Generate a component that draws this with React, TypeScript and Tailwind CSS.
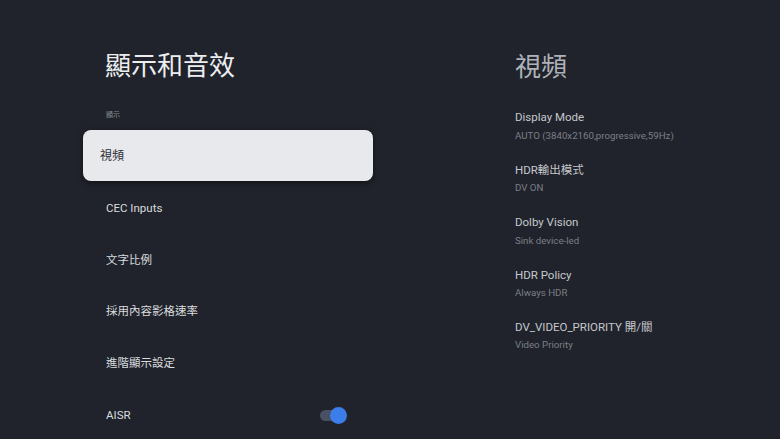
import React from "react";

const FONT = { fontFamily: 'Roboto, "Noto Sans CJK TC", "Noto Sans", sans-serif' };

const leftItems = ["CEC Inputs", "文字比例", "採用內容影格速率", "進階顯示設定"];

const rightItems = [
  ["Display Mode", "AUTO (3840x2160,progressive,59Hz)"],
  ["HDR輸出模式", "DV ON"],
  ["Dolby Vision", "Sink device-led"],
  ["HDR Policy", "Always HDR"],
  ["DV_VIDEO_PRIORITY 開/關", "Video Priority"],
];

export default function App() {
  return (
    <div className="w-[780px] h-[439px] overflow-hidden bg-[#20232b] flex" style={FONT}>
      <div className="ml-[83px] w-[290px] flex flex-col">
        <div className="shrink-0 h-[52px] mt-[40px] flex items-center pl-[22px] text-[26px] text-[#eceef0] leading-none">
          顯示和音效
        </div>
        <div className="shrink-0 mt-[16px] h-[14px] flex items-center pl-[23px] text-[7px] text-[#8a8e96] leading-none">
          顯示
        </div>
        <div className="shrink-0 mt-[8px] h-[51px] rounded-[8px] bg-[#e8e9ed] shadow-[0_2px_6px_rgba(0,0,0,0.5)] flex items-center px-[17px] text-[12px] text-[#2b2e35]">
          視頻
        </div>
        <div className="shrink-0 h-[1.5px]" />
        {leftItems.map((t) => (
          <div key={t} className="shrink-0 h-[51.8px] flex items-center px-[23px] text-[11.5px] text-[#d9dbdf]">
            {t}
          </div>
        ))}
        <div className="shrink-0 h-[51.8px] flex items-center justify-between pl-[23px] pr-[26px] text-[11.5px] text-[#d9dbdf]">
          <span>AISR</span>
          <div className="relative w-[27px] h-[17px] flex items-center">
            <div className="w-[24px] h-[11px] rounded-full bg-[#485063]" />
            <div className="absolute right-0 top-0 w-[17px] h-[17px] rounded-full bg-[#3b7de9]" />
          </div>
        </div>
      </div>
      <div className="ml-[142px] flex flex-col">
        <div className="shrink-0 h-[52px] mt-[41px] flex items-center text-[26px] text-[#aeb2b8] leading-none">
          視頻
        </div>
        <div className="shrink-0 mt-[16px] flex flex-col">
          {rightItems.map(([a, b]) => (
            <div key={a} className="shrink-0 h-[52.4px] flex flex-col">
              <div className="h-[18px] flex items-center text-[11.5px] text-[#c5c8cd] whitespace-nowrap">{a}</div>
              <div className="h-[18px] flex items-center text-[9.7px] text-[#7b7f87] whitespace-nowrap">{b}</div>
            </div>
          ))}
        </div>
      </div>
    </div>
  );
}
